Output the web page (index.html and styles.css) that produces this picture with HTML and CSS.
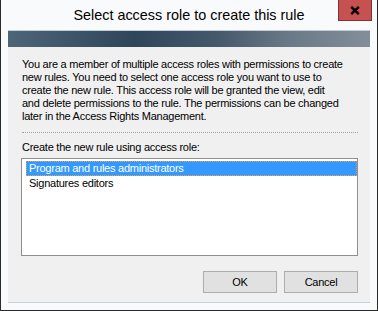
FILE: index.html
```html
<!DOCTYPE html>
<html>
<head>
<meta charset="utf-8">
<link rel="stylesheet" href="styles.css">
</head>
<body>
<div class="window">
  <div class="titlebar">
    <span class="title">Select access role to create this rule</span>
    <div class="close">
      <svg width="10" height="9" viewBox="0 0 10 9"><path d="M1.2 0.8 L8.8 8.2 M8.8 0.8 L1.2 8.2" stroke="#000" stroke-width="2.4" fill="none"/></svg>
    </div>
  </div>
  <div class="client">
    <div class="banner"></div>
    <div class="content">
      <p class="message">You are a member of multiple access roles with permissions to create<br>new rules. You need to select one access role you want to use to<br>create the new rule. This access role will be granted the view, edit<br>and delete permissions to the rule. The permissions can be changed<br>later in the Access Rights Management.</p>
      <div class="separator"></div>
      <div class="label">Create the new rule using access role:</div>
      <div class="listbox">
        <div class="item selected">Program and rules administrators</div>
        <div class="item">Signatures editors</div>
      </div>
      <div class="buttons">
        <button class="btn">OK</button>
        <button class="btn">Cancel</button>
      </div>
    </div>
  </div>
</div>
</body>
</html>
```
FILE: styles.css
```css
html, body {
  margin: 0;
  padding: 0;
  background: #f9fafb;
}
.window {
  box-sizing: border-box;
  width: 378px;
  height: 311px;
  border-left: 1px solid #2b2b2b;
  border-right: 1px solid #2b2b2b;
  border-bottom: 1px solid #2b2b2b;
  background: #f9fafb;
  display: flex;
  flex-direction: column;
  padding: 0 7px 7px 7px;
  position: relative;
}
.titlebar {
  height: 30px;
  display: flex;
  align-items: center;
  justify-content: center;
}
.title {
  font-family: "Liberation Sans", Arial, sans-serif;
  font-size: 14.4px;
  color: #000;
  line-height: 18px;
  margin-top: -1px;
}
.close {
  position: absolute;
  top: 0;
  left: 337px;
  width: 32px;
  height: 20px;
  background: #c75050;
  border: 1px solid #7d3434;
  border-top: none;
  display: flex;
  align-items: center;
  justify-content: center;
}
.close svg { display: block; margin-top: 1px; }
.client {
  flex: 1;
  display: flex;
  flex-direction: column;
  border-bottom: 1px solid #c9d1d9;
}
.banner {
  height: 16px;
  border-top: 1px solid #c3ccd5;
  background: linear-gradient(90deg, #4e6578 0%, #2f4659 35%, #45596b 58%, #6b7a88 78%, #838e99 100%);
}
.content {
  flex: 1;
  background: #f0f0f0;
  padding: 11px 12px 0 13px;
  font-family: "Liberation Sans", Arial, sans-serif;
  font-size: 11px;
  letter-spacing: -0.25px;
  color: #000;
  display: flex;
  flex-direction: column;
}
.message {
  margin: 0 0 0 1px;
  line-height: 13px;
  white-space: nowrap;
}
.separator {
  margin: 9px 0 0 1px;
  border-top: 1px dotted #a0a0a0;
}
.label {
  margin: 8px 0 0 1px;
  line-height: 13px;
}
.listbox {
  margin-top: 4px;
  height: 94px;
  border: 1px solid #8f8f8f;
  background: #fff;
  padding: 2px 0 0 4px;
}
.item {
  height: 15px;
  line-height: 15px;
  padding-left: 3px;
  box-sizing: border-box;
}
.item.selected {
  background: #3399ff;
  color: #fff;
  border: 1px dotted #e8a24a;
  line-height: 13px;
  padding-left: 2px;
}
.buttons {
  margin-top: 15px;
  display: flex;
  justify-content: flex-end;
  gap: 7px;
}
.btn {
  width: 74px;
  height: 22px;
  padding: 0;
  margin: 0;
  background: #e1e1e1;
  border: 1px solid #adadad;
  font-family: "Liberation Sans", Arial, sans-serif;
  font-size: 11px;
  letter-spacing: -0.25px;
  color: #000;
}
```
